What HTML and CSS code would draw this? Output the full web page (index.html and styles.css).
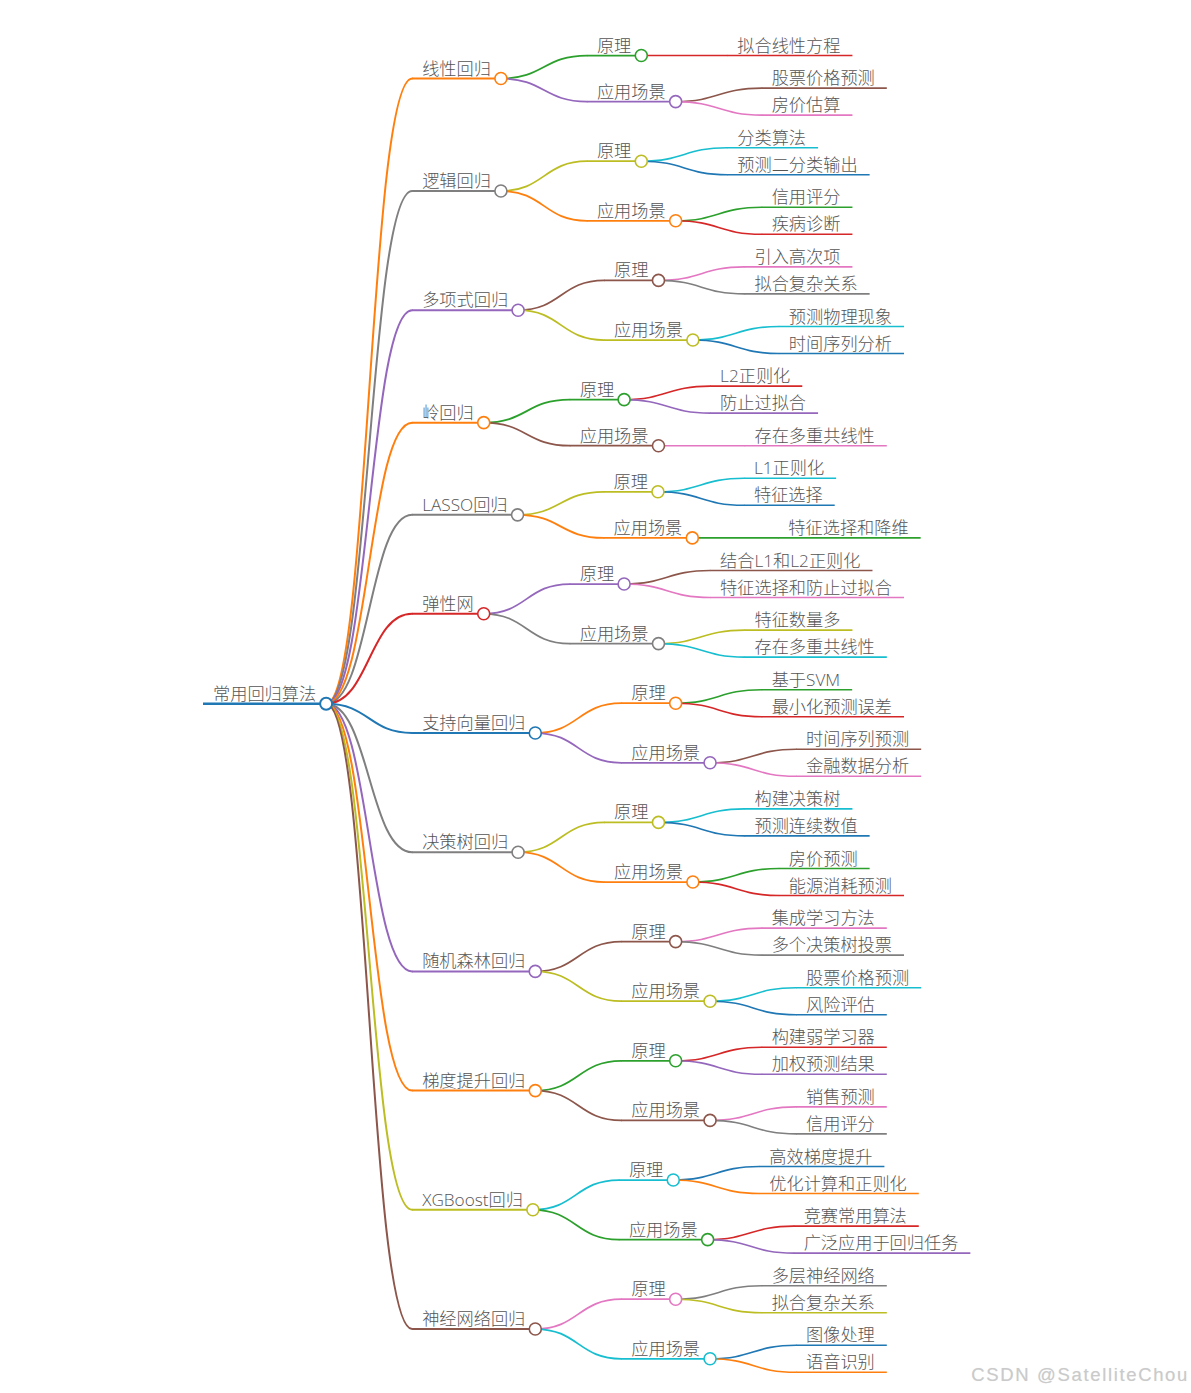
FILE: index.html
```html
<!DOCTYPE html>
<html lang="zh-CN">
<head>
<meta charset="utf-8">
<title>常用回归算法</title>
<link rel="stylesheet" href="styles.css">
</head>
<body>
<div class="page">
  <svg id="map" class="map" width="1191" height="1393" viewBox="0 0 1191 1393" xmlns="http://www.w3.org/2000/svg"></svg>
  <div class="watermark">CSDN @SatelliteChou</div>
</div>
<script src="script.js"></script>
</body>
</html>
```

FILE: styles.css
```css
html, body {
  margin: 0;
  padding: 0;
  background: #ffffff;
}
.page {
  position: relative;
  width: 1191px;
  height: 1393px;
  overflow: hidden;
}
.map {
  display: block;
  width: 1191px;
  height: 1393px;
}
.label {
  font-family: "Open Sans", "Noto Sans CJK SC", sans-serif;
  font-weight: 300;
  font-size: 17.2px;
  fill: #555555;
}
.link {
  fill: none;
  stroke-linecap: round;
}
.underline {
  stroke-linecap: butt;
}
.dot {
  fill: #ffffff;
}
.watermark {
  position: absolute;
  right: 2px;
  bottom: 9px;
  font-family: "Liberation Sans", Arial, sans-serif;
  font-size: 18.5px;
  letter-spacing: 1.65px;
  line-height: 1;
  color: #cacaca;
  text-shadow: 0 0 1px rgba(0, 0, 0, 0.1);
}
```

FILE: script.js
```js
(function () {
  var NS = 'http://www.w3.org/2000/svg';
  var COLORS = ['#1f77b4', '#ff7f0e', '#2ca02c', '#d62728', '#9467bd',
                '#8c564b', '#e377c2', '#7f7f7f', '#bcbd22', '#17becf'];
  var LW = [2.5, 2, 1.75, 1.6];
  var DATA = ['常用回归算法', [
    ['线性回归', [['原理', ['拟合线性方程']], ['应用场景', ['股票价格预测', '房价估算']]]],
    ['逻辑回归', [['原理', ['分类算法', '预测二分类输出']], ['应用场景', ['信用评分', '疾病诊断']]]],
    ['多项式回归', [['原理', ['引入高次项', '拟合复杂关系']], ['应用场景', ['预测物理现象', '时间序列分析']]]],
    ['岭回归', [['原理', ['L2正则化', '防止过拟合']], ['应用场景', ['存在多重共线性']]]],
    ['LASSO回归', [['原理', ['L1正则化', '特征选择']], ['应用场景', ['特征选择和降维']]]],
    ['弹性网', [['原理', ['结合L1和L2正则化', '特征选择和防止过拟合']], ['应用场景', ['特征数量多', '存在多重共线性']]]],
    ['支持向量回归', [['原理', ['基于SVM', '最小化预测误差']], ['应用场景', ['时间序列预测', '金融数据分析']]]],
    ['决策树回归', [['原理', ['构建决策树', '预测连续数值']], ['应用场景', ['房价预测', '能源消耗预测']]]],
    ['随机森林回归', [['原理', ['集成学习方法', '多个决策树投票']], ['应用场景', ['股票价格预测', '风险评估']]]],
    ['梯度提升回归', [['原理', ['构建弱学习器', '加权预测结果']], ['应用场景', ['销售预测', '信用评分']]]],
    ['XGBoost回归', [['原理', ['高效梯度提升', '优化计算和正则化']], ['应用场景', ['竞赛常用算法', '广泛应用于回归任务']]]],
    ['神经网络回归', [['原理', ['多层神经网络', '拟合复杂关系']], ['应用场景', ['图像处理', '语音识别']]]]
  ]];

  function build(d, depth) {
    if (typeof d === 'string') return { t: d, ch: [], depth: depth };
    return { t: d[0], ch: d[1].map(function (c) { return build(c, depth + 1); }), depth: depth };
  }

  function mk(tag, attrs, parent) {
    var el = document.createElementNS(NS, tag);
    for (var k in attrs) el.setAttribute(k, attrs[k]);
    if (parent) parent.appendChild(el);
    return el;
  }

  function render() {
    var svg = document.getElementById('map');
    while (svg.firstChild) svg.removeChild(svg.firstChild);
    var root = build(DATA, 0);

    // colour index in depth-first order
    var ci = 0;
    (function color(n) { n.ci = ci++ % 10; n.ch.forEach(color); })(root);

    // vertical positions: leaves stacked, parents centred on first/last child
    var cursor = null, prevParent = null;
    (function vy(n, parent) {
      if (!n.ch.length) {
        if (cursor === null) cursor = 55.5;
        else cursor += (parent === prevParent) ? 27 : 32.6;
        prevParent = parent;
        n.y = cursor;
      } else {
        n.ch.forEach(function (c) { vy(c, n); });
        n.y = (n.ch[0].y + n.ch[n.ch.length - 1].y) / 2;
      }
    })(root, null);

    var gLinks = mk('g', {}, svg);
    var gLines = mk('g', {}, svg);
    var gDots = mk('g', {}, svg);
    var gText = mk('g', {}, svg);

    // measure labels
    (function measure(n) {
      n.el = mk('text', { 'class': 'label', x: 0, y: 0 }, gText);
      n.el.textContent = n.t;
      n.w = n.el.getComputedTextLength();
      n.ch.forEach(measure);
    })(root);

    // horizontal positions
    (function place(n, x0) {
      n.x0 = x0;
      n.tx = x0 + 10;
      n.te = n.tx + n.w;
      if (n.ch.length) {
        n.cx = n.te + 10;
        n.ch.forEach(function (c) { place(c, n.cx + 86); });
      } else {
        n.end = n.te + 12;
      }
    })(root, 203);

    (function draw(n) {
      var col = COLORS[n.ci];
      var lw = LW[Math.min(n.depth, LW.length - 1)];
      n.ch.forEach(function (c) {
        var m = (n.cx + c.x0) / 2;
        mk('path', {
          'class': 'link',
          d: 'M' + n.cx + ',' + n.y + ' C' + m + ',' + n.y + ' ' + m + ',' + c.y + ' ' + c.x0 + ',' + c.y,
          stroke: COLORS[c.ci],
          'stroke-width': LW[Math.min(c.depth, LW.length - 1)]
        }, gLinks);
      });
      mk('line', {
        'class': 'underline',
        x1: n.x0, y1: n.y, x2: n.ch.length ? n.cx : n.end, y2: n.y,
        stroke: col, 'stroke-width': lw
      }, gLines);
      if (n.ch.length) {
        mk('circle', { 'class': 'dot', cx: n.cx, cy: n.y, r: 6, stroke: col, 'stroke-width': n.depth === 0 ? 2 : 1.6 }, gDots);
      }
      n.el.setAttribute('x', n.tx);
      n.el.setAttribute('y', n.y - 4);
      n.ch.forEach(draw);
    })(root);
  }

  render();
  if (document.fonts && document.fonts.ready) {
    document.fonts.ready.then(render);
  }
})();
```
